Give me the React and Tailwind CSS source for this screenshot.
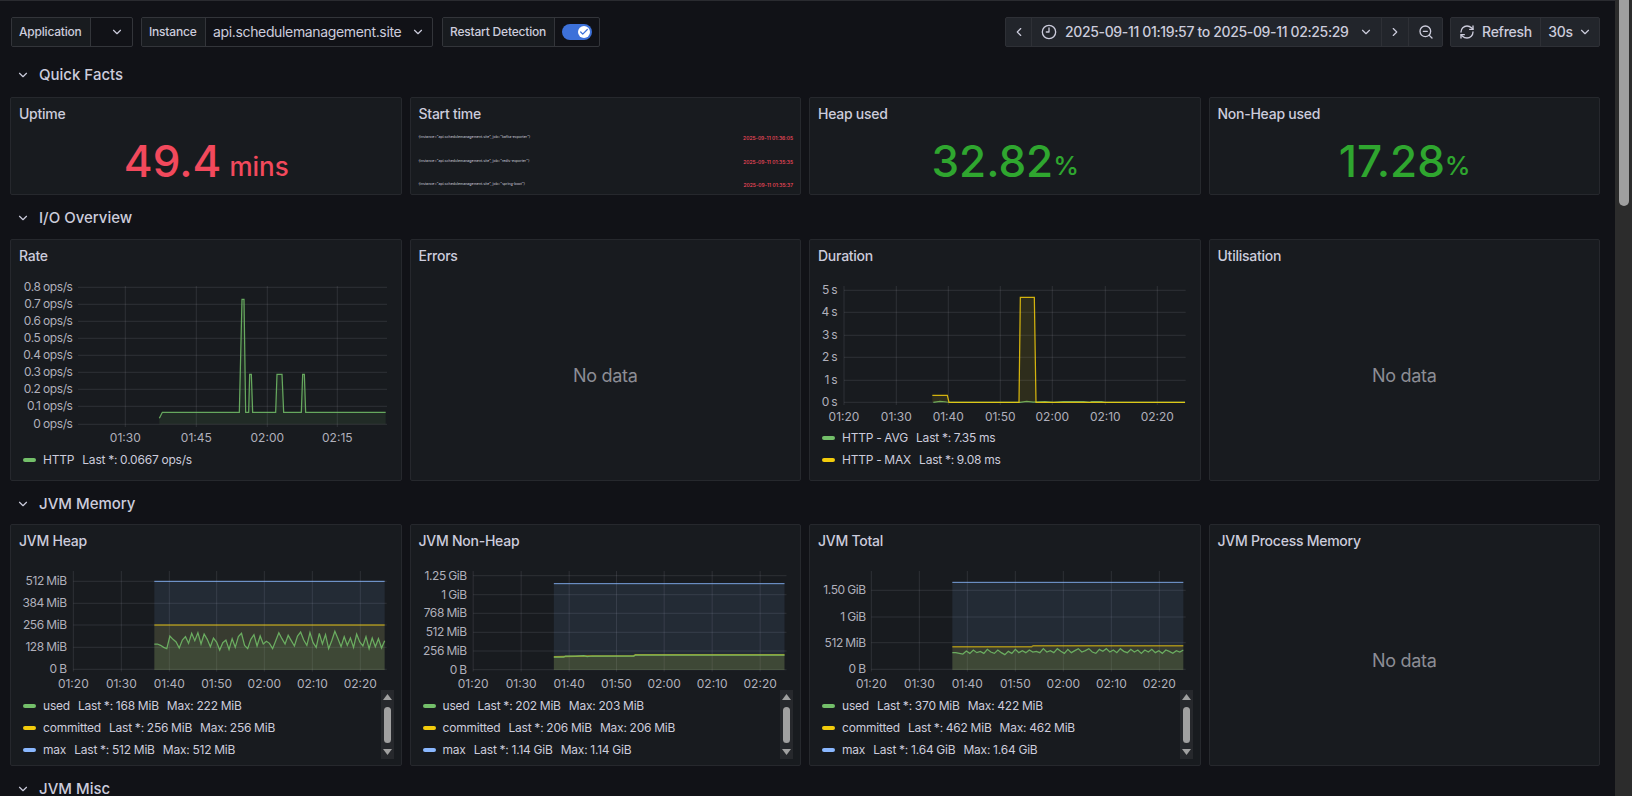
import React from "react";
import { ChevronDown, ChevronLeft, ChevronRight, Clock9, RefreshCw, ZoomOut, Check } from "lucide-react";

const GREEN = "#73bf69";
const YELLOW = "#f2cc0c";
const BLUE = "#8ab8ff";

// points were read off 3x crops, so x/y are given in crop units
const toPage = (pts, ox, oy) => pts.map(([x, y]) => [ox + x / 3, oy + y / 3]);
const line = (pts) => pts.map(([x, y]) => `${x},${y}`).join(" ");
const area = (pts, bottom) =>
  `${pts[0][0]},${bottom} ${line(pts)} ${pts[pts.length - 1][0]},${bottom}`;
const zigzag = (ys, x0, x1) => ys.map((y, i) => [x0 + ((x1 - x0) * i) / (ys.length - 1), y]);

function Chart({ box, hLines, vLines, left, right, top, bottom, labelRight, xLabelY, children }) {
  return (
    <svg width={box[2]} height={box[3]} viewBox={box.join(" ")} className="block shrink-0">
      {hLines.map(([y]) => (
        <line key={y} x1={left} x2={right} y1={y} y2={y} stroke="#ccccdc" strokeOpacity="0.12" />
      ))}
      {vLines.map(([x]) => (
        <line key={x} x1={x} x2={x} y1={top} y2={bottom} stroke="#ccccdc" strokeOpacity="0.12" />
      ))}
      {children}
      {hLines.map(([y, label]) => (
        <text
          key={y}
          x={labelRight}
          y={y + 4}
          textAnchor="end"
          fontSize="12"
          fill="#b0b0bb"
          className="tracking-[-0.4px] [word-spacing:-0.5px]"
        >
          {label}
        </text>
      ))}
      {vLines.map(([x, label]) => (
        <text key={x} x={x} y={xLabelY + 5} textAnchor="middle" fontSize="12" fill="#b0b0bb">
          {label}
        </text>
      ))}
    </svg>
  );
}

function Series({ pts, bottom, color, width = 1.25, opacity = 0.85 }) {
  return (
    <>
      <polygon points={area(pts, bottom)} fill={color} fillOpacity="0.1" />
      <polyline points={line(pts)} fill="none" stroke={color} strokeWidth={width} strokeOpacity={opacity} />
    </>
  );
}

function LegendRow({ color, name, values }) {
  return (
    <div className="flex h-[22px] items-center text-xs tracking-[-0.2px] text-[#ccccdc] [word-spacing:-0.3px]">
      <span className="mr-[7px] h-1 w-[13px] rounded-full" style={{ backgroundColor: color }} />
      <span className="mr-2">{name}</span>
      {values.map((v) => (
        <span key={v} className="mr-2">
          {v}
        </span>
      ))}
    </div>
  );
}

function LegendScrollbar() {
  return (
    <div className="absolute right-[7px] top-[-5px] flex h-[69px] w-[13px] flex-col items-center justify-between bg-[#26282c] py-[4px]">
      <svg width="9" height="6" viewBox="0 0 9 6">
        <polygon points="4.5,0 9,6 0,6" fill="#a0a0a0" />
      </svg>
      <div className="h-9 w-[7px] rounded-full bg-[#a0a0a0]" />
      <svg width="9" height="6" viewBox="0 0 9 6">
        <polygon points="0,0 9,0 4.5,6" fill="#a0a0a0" />
      </svg>
    </div>
  );
}

function Panel({ title, height, children }) {
  return (
    <div className={`flex flex-col overflow-hidden rounded-[2px] border border-[#26282d] bg-[#181b1f] ${height}`}>
      <div className="flex h-8 shrink-0 items-center px-2 text-sm font-medium tracking-[-0.25px] text-[#ccccdc]">
        {title}
      </div>
      {children}
    </div>
  );
}

function NoData() {
  return (
    <div className="flex flex-1 items-center justify-center pb-[1px] text-lg tracking-[-0.3px] text-[#8c8d95]">
      No data
    </div>
  );
}

function Stat({ title, value, unit, color, small }) {
  return (
    <Panel title={title} height="h-[98px]">
      <div className={`flex flex-1 items-center justify-center pb-[2px] pl-[1px] font-medium ${color}`}>
        <span className="text-[44px] leading-none">{value}</span>
        <span className={`text-[26px] leading-none ${small ? "ml-[8px] mt-[11px]" : "mt-[9px]"}`}>{unit}</span>
      </div>
    </Panel>
  );
}

function SectionHeader({ title, className }) {
  return (
    <div className={`flex h-[30px] items-center pl-[6px] ${className}`}>
      <ChevronDown className="h-3.5 w-3.5 text-[#ccccdc]" />
      <span className="ml-[9px] text-[15px] font-medium leading-[14px] text-[#ccccdc]">{title}</span>
    </div>
  );
}

const startRows = [
  ["kafka-exporter", "2025-09-11 01:36:05"],
  ["redis-exporter", "2025-09-11 01:35:35"],
  ["spring-boot", "2025-09-11 01:35:37"],
];

function StartTime() {
  return (
    <Panel title="Start time" height="h-[98px]">
      <div className="flex flex-col pl-2 pr-[7px] pt-[3px]">
        {startRows.map(([job, time]) => (
          <div key={job} className="flex h-[23.5px] items-start justify-between">
            <span className="mt-[1px] text-[3.6px] leading-[6px] text-[#ccccdc]">
              {`{instance="api.schedulemanagement.site", job="${job}"}`}
            </span>
            <span className="mt-[2px] text-[5px] font-medium leading-[6px] text-[#f2495c]">{time}</span>
          </div>
        ))}
      </div>
    </Panel>
  );
}

function RateChart() {
  const pts = toPage(
    [[478, 565], [487, 547], [718, 547], [726, 208], [732, 208], [737, 547], [746, 547], [749, 433], [754, 433], [758, 547], [827, 547], [831, 433], [846, 433], [851, 547], [904, 547], [908, 433], [913, 433], [917, 547], [1157, 547]],
    0,
    230
  );
  const labels = ["0.8", "0.7", "0.6", "0.5", "0.4", "0.3", "0.2", "0.1", "0"];
  const ys = [287.3, 304.3, 321.3, 338.3, 355.3, 372.3, 389.3, 406.3, 424.3];
  return (
    <Chart
      box={[11, 272, 390, 177]}
      hLines={ys.map((y, i) => [y, `${labels[i]} ops/s`])}
      vLines={[[125.3, "01:30"], [196.3, "01:45"], [267.3, "02:00"], [337.3, "02:15"]]}
      left={78}
      right={387}
      top={286}
      bottom={427}
      labelRight={72.5}
      xLabelY={437}
    >
      <Series pts={pts} bottom={424.3} color={GREEN} />
    </Chart>
  );
}

function DurationChart() {
  const max = toPage(
    [[397, 496], [442, 496], [447, 517], [657, 517], [661, 202], [703, 202], [708, 517], [1155, 517]],
    800,
    230
  );
  const avg = toPage(
    [[400, 517], [420, 514], [440, 516], [460, 517], [660, 517], [680, 514], [700, 516], [735, 515], [760, 517], [790, 515], [850, 515], [870, 517], [875, 515], [905, 515], [915, 517], [1155, 517]],
    800,
    230
  );
  return (
    <Chart
      box={[810, 272, 390, 155]}
      hLines={[[290.3, "5 s"], [312.3, "4 s"], [335.3, "3 s"], [357.3, "2 s"], [380.3, "1 s"], [402.3, "0 s"]]}
      vLines={[[844, "01:20"], [896.3, "01:30"], [948.3, "01:40"], [1000.3, "01:50"], [1052.3, "02:00"], [1105.3, "02:10"], [1157.3, "02:20"]]}
      left={844}
      right={1185.7}
      top={286}
      bottom={405}
      labelRight={837.3}
      xLabelY={415.7}
    >
      <Series pts={avg} bottom={402.3} color={GREEN} />
      <Series pts={max} bottom={402.3} color={YELLOW} />
    </Chart>
  );
}

const times = ["01:20", "01:30", "01:40", "01:50", "02:00", "02:10", "02:20"];

function MemoryChart({ box, hLines, vXs, left, right, labelRight, ox, x0, x1, maxY, committed, used }) {
  const bottom = 670;
  const page = (pts) => toPage(pts, ox, 490);
  return (
    <Chart
      box={box}
      hLines={hLines}
      vLines={vXs.map((x, i) => [ox + x / 3, times[i]])}
      left={left}
      right={right}
      top={571}
      bottom={671.6}
      labelRight={labelRight}
      xLabelY={683.3}
    >
      <Series pts={page([[x0, maxY], [x1, maxY]])} bottom={bottom} color={BLUE} width={1} />
      <Series pts={page(committed)} bottom={bottom} color={YELLOW} width={1.5} opacity={0.6} />
      <Series pts={page(used)} bottom={bottom} color={GREEN} />
    </Chart>
  );
}

const heapUsed = [462, 462, 466, 472, 476, 438, 448, 456, 474, 450, 440, 460, 430, 452, 428, 462, 432, 448, 470, 444, 456, 480, 458, 450, 478, 446, 472, 440, 430, 466, 476, 448, 434, 468, 438, 462, 454, 460, 476, 452, 428, 446, 462, 436, 452, 468, 438, 426, 450, 466, 428, 458, 472, 430, 462, 434, 476, 452, 424, 446, 470, 440, 466, 444, 472, 432, 456, 468, 440, 476, 444, 470, 446, 474, 452];
const totalUsed = [488, 488, 490, 492, 483, 490, 480, 488, 484, 490, 478, 486, 490, 480, 488, 494, 484, 490, 478, 488, 482, 488, 480, 486, 484, 488, 476, 486, 482, 488, 476, 484, 490, 478, 488, 482, 476, 486, 482, 476, 486, 490, 478, 484, 476, 486, 480, 488, 476, 484, 488, 478, 486, 480, 490, 480, 486, 478, 488, 482, 490, 480, 484, 490, 482, 486, 480];

const memoryPanels = [
  {
    title: "JVM Heap",
    box: [11, 557, 390, 138],
    hLines: [[581.3, "512 MiB"], [603.3, "384 MiB"], [625, "256 MiB"], [647.3, "128 MiB"], [669.3, "0 B"]],
    vXs: [220, 364, 508, 650, 793, 937, 1081],
    left: 73.3,
    right: 386.7,
    labelRight: 66.7,
    ox: 0,
    x0: 463,
    x1: 1154,
    maxY: 274,
    committed: [[463, 405], [1154, 405]],
    used: zigzag(heapUsed, 463, 1154),
    legend: [
      ["used", ["Last *: 168 MiB", "Max: 222 MiB"]],
      ["committed", ["Last *: 256 MiB", "Max: 256 MiB"]],
      ["max", ["Last *: 512 MiB", "Max: 512 MiB"]],
    ],
  },
  {
    title: "JVM Non-Heap",
    box: [410.5, 557, 390, 138],
    hLines: [[575.7, "1.25 GiB"], [594.7, "1 GiB"], [613.3, "768 MiB"], [632.3, "512 MiB"], [651, "256 MiB"], [669.7, "0 B"]],
    vXs: [218, 362, 506, 648, 791, 935, 1079],
    left: 472.7,
    right: 786,
    labelRight: 466.3,
    ox: 400,
    x0: 460,
    x1: 1152,
    maxY: 281,
    committed: [[460, 500], [560, 498], [700, 497], [705, 494], [1152, 494]],
    used: [[460, 501], [490, 501], [495, 498], [525, 498], [550, 497], [560, 500], [575, 498], [700, 498], [705, 495], [1152, 495]],
    legend: [
      ["used", ["Last *: 202 MiB", "Max: 203 MiB"]],
      ["committed", ["Last *: 206 MiB", "Max: 206 MiB"]],
      ["max", ["Last *: 1.14 GiB", "Max: 1.14 GiB"]],
    ],
  },
  {
    title: "JVM Total",
    box: [810, 557, 390, 138],
    hLines: [[590.3, "1.50 GiB"], [617, "1 GiB"], [642.7, "512 MiB"], [669.3, "0 B"]],
    vXs: [214, 358, 502, 646, 790, 934, 1078],
    left: 871.3,
    right: 1185.7,
    labelRight: 865.7,
    ox: 800,
    x0: 457,
    x1: 1150,
    maxY: 277,
    committed: [[457, 470], [695, 470], [700, 467], [1150, 467]],
    used: zigzag(totalUsed, 457, 1150),
    legend: [
      ["used", ["Last *: 370 MiB", "Max: 422 MiB"]],
      ["committed", ["Last *: 462 MiB", "Max: 462 MiB"]],
      ["max", ["Last *: 1.64 GiB", "Max: 1.64 GiB"]],
    ],
  },
];

const seriesColor = { used: GREEN, committed: YELLOW, max: BLUE };

function VariableLabel({ children, className = "" }) {
  return (
    <div className={`flex items-center whitespace-nowrap border-r border-[#33353a] bg-[#181b1f] px-[7px] text-xs font-medium tracking-[-0.2px] text-[#ccccdc] ${className}`}>
      {children}
    </div>
  );
}

function TopBar() {
  const box = "flex h-[30px] rounded-[2px] border border-[#33353a]";
  const tool = "flex items-center justify-center text-[#ccccdc]";
  return (
    <div className="mt-[16px] flex justify-between">
      <div className="ml-[1px] flex gap-2">
        <div className={`${box} w-[122px]`}>
          <VariableLabel className="w-[79px]">Application</VariableLabel>
          <div className="flex flex-1 items-center justify-end pr-[8px] text-[#ccccdc]">
            <ChevronDown className="h-3.5 w-3.5" />
          </div>
        </div>
        <div className={`${box} w-[292px]`}>
          <VariableLabel className="w-[64px]">Instance</VariableLabel>
          <div className="flex flex-1 items-center justify-between pl-[7px] pr-[7px] text-sm tracking-[-0.35px] text-[#ccccdc]">
            api.schedulemanagement.site
            <ChevronDown className="h-3.5 w-3.5" />
          </div>
        </div>
        <div className={`${box} ml-[1px] w-[158px]`}>
          <VariableLabel className="w-[112px]">Restart Detection</VariableLabel>
          <div className="flex flex-1 items-center pl-[7px]">
            <div className="flex h-4 w-[30px] items-center justify-end rounded-full bg-[#3d71d9] pr-[2px]">
              <div className="flex h-3 w-3 items-center justify-center rounded-full bg-white">
                <Check className="h-2.5 w-2.5 text-[#3d71d9]" strokeWidth={3} />
              </div>
            </div>
          </div>
        </div>
      </div>
      <div className="flex gap-[7px]">
        <div className="flex h-[30px] rounded-[2px] border border-[#2e3036] bg-[#22252b] text-sm font-medium tracking-[-0.35px]">
          <div className={`${tool} w-[26px] border-r border-[#2e3036]`}>
            <ChevronLeft className="h-3.5 w-3.5" />
          </div>
          <div className={`${tool} w-[350px] border-r border-[#2e3036] pl-[9px] pr-[8px]`}>
            <Clock9 className="mr-[8px] h-4 w-4 shrink-0" />
            <span className="whitespace-nowrap">2025-09-11 01:19:57 to 2025-09-11 02:25:29</span>
            <ChevronDown className="ml-auto h-3.5 w-3.5" />
          </div>
          <div className={`${tool} w-[27px] border-r border-[#2e3036]`}>
            <ChevronRight className="h-3.5 w-3.5" />
          </div>
          <div className={`${tool} w-[33px]`}>
            <ZoomOut className="h-4 w-4" />
          </div>
        </div>
        <div className="flex h-[30px] rounded-[2px] border border-[#2e3036] bg-[#22252b] text-sm font-medium tracking-[-0.25px]">
          <div className={`${tool} w-[90px] gap-[7px] border-r border-[#2e3036]`}>
            <RefreshCw className="h-4 w-4" />
            Refresh
          </div>
          <div className={`${tool} w-[58px] gap-[5px]`}>
            30s
            <ChevronDown className="h-3.5 w-3.5" />
          </div>
        </div>
      </div>
    </div>
  );
}

export default function App() {
  return (
    <div className="flex h-[796px] overflow-hidden bg-[#111217] font-['Inter',sans-serif]">
      <main className="w-[1615px] shrink-0 border-t border-[#2a2b30] pl-[10px] pr-[15px]">
        <TopBar />

        <SectionHeader title="Quick Facts" className="mb-[7px] mt-[13px]" />
        <div className="grid grid-cols-4 gap-2">
          <Stat title="Uptime" value="49.4" unit="mins" color="text-[#f2495c]" small />
          <StartTime />
          <Stat title="Heap used" value="32.82" unit="%" color="text-[#2fa62f]" />
          <Stat title="Non-Heap used" value="17.28" unit="%" color="text-[#2fa62f]" />
        </div>

        <SectionHeader title="I/O Overview" className="mb-[6px] mt-2" />
        <div className="grid grid-cols-4 gap-2">
          <Panel title="Rate" height="h-[242px]">
            <RateChart />
            <div className="pl-3">
              <LegendRow color={GREEN} name="HTTP" values={["Last *: 0.0667 ops/s"]} />
            </div>
          </Panel>
          <Panel title="Errors" height="h-[242px]">
            <NoData />
          </Panel>
          <Panel title="Duration" height="h-[242px]">
            <DurationChart />
            <div className="pl-3">
              <LegendRow color={GREEN} name="HTTP - AVG" values={["Last *: 7.35 ms"]} />
              <LegendRow color={YELLOW} name="HTTP - MAX" values={["Last *: 9.08 ms"]} />
            </div>
          </Panel>
          <Panel title="Utilisation" height="h-[242px]">
            <NoData />
          </Panel>
        </div>

        <SectionHeader title="JVM Memory" className="mb-[5px] mt-2" />
        <div className="grid grid-cols-4 gap-2">
          {memoryPanels.map(({ title, legend, ...chart }) => (
            <Panel key={title} title={title} height="h-[242px]">
              <MemoryChart {...chart} />
              <div className="relative pl-3">
                {legend.map(([name, values]) => (
                  <LegendRow key={name} color={seriesColor[name]} name={name} values={values} />
                ))}
                <LegendScrollbar />
              </div>
            </Panel>
          ))}
          <Panel title="JVM Process Memory" height="h-[242px]">
            <NoData />
          </Panel>
        </div>

        <SectionHeader title="JVM Misc" className="mt-2" />
      </main>
      <aside className="flex-1 bg-[#2c2c2c] pl-[4px]">
        <div className="h-[206px] w-[10px] rounded-b-full bg-[#9f9f9f]" />
      </aside>
    </div>
  );
}
